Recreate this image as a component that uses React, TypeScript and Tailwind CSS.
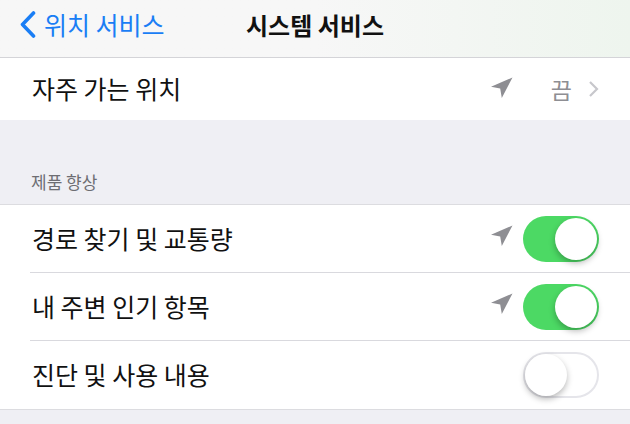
import React from "react";

const font = { fontFamily: '"Noto Sans CJK KR", "Noto Sans", sans-serif' };

function Arrow() {
  return (
    <svg width="22" height="21" viewBox="0 0 22 21" className="shrink-0">
      <path d="M21.5 0.5 L0 9.8 L9.2 11.5 L10.8 21 Z" fill="#8e8e93" />
    </svg>
  );
}

function Toggle({ on }: { on: boolean }) {
  return (
    <div
      className={
        "relative w-[76px] h-[46px] rounded-full shrink-0 " +
        (on ? "bg-[#4cd964]" : "bg-white border-[2px] border-[#e5e5ea]")
      }
    >
      <div
        className={
          "absolute rounded-full bg-white w-[42px] h-[42px] shadow-[0_3px_6px_rgba(0,0,0,0.28)] " +
          (on ? "top-[2px] right-[2px]" : "top-0 left-0")
        }
      />
    </div>
  );
}

function Row({ label, on, arrow, last }: { label: string; on: boolean; arrow: boolean; last?: boolean }) {
  return (
    <div className="bg-white pl-[30px]">
      <div
        className={
          "h-[68px] flex items-center pr-[31px] " +
          (last ? "" : "border-b border-[#d9d9de]")
        }
      >
        <span className="text-[25px] text-[#111] flex-1 pl-[2px]">{label}</span>
        {arrow && (
          <div className="mr-[10px] mt-[-6px]">
            <Arrow />
          </div>
        )}
        <Toggle on={on} />
      </div>
    </div>
  );
}

export default function App() {
  return (
    <div className="w-[630px] h-[424px] overflow-hidden bg-[#efeff4]" style={font}>
      <div className="h-[58px] border-b border-[#d4d4d8] bg-gradient-to-r from-[#f7f7f7] via-[#f7f7f7] to-[#eef5ee] grid grid-cols-[1fr_auto_1fr] items-center pb-[8px]">
        <div className="flex items-center pl-[19px]">
          <svg width="17" height="27" viewBox="0 0 17 27">
            <polyline points="14.5,2 3.5,13.5 14.5,25" fill="none" stroke="#1a7ef5" strokeWidth="3.6" strokeLinecap="round" strokeLinejoin="round" />
          </svg>
          <span className="ml-[8px] text-[25px] text-[#1a7ef5]">위치 서비스</span>
        </div>
        <div className="text-[24px] font-bold text-[#111]">시스템 서비스</div>
        <div />
      </div>
      <div className="bg-white h-[62px] flex items-center pl-[32px] pr-[31px]">
        <span className="text-[25px] text-[#111] flex-1">자주 가는 위치</span>
        <div className="mt-[-4px]">
          <Arrow />
        </div>
        <span className="ml-[38px] text-[23px] text-[#8e8e93]">끔</span>
        <svg width="11" height="18" viewBox="0 0 11 18" className="ml-[16px]">
          <polyline points="2,2 9,9 2,16" fill="none" stroke="#c7c7cc" strokeWidth="2.2" />
        </svg>
      </div>
      <div className="h-[85px] pt-[50px] pl-[31px] text-[17px] text-[#6d6d72] border-b border-[#dcdce0] leading-[24px]">
        제품 향상
      </div>
      <Row label="경로 찾기 및 교통량" on arrow />
      <Row label="내 주변 인기 항목" on arrow />
      <Row label="진단 및 사용 내용" on={false} arrow={false} last />
      <div className="border-t border-[#dcdce0]" />
    </div>
  );
}
